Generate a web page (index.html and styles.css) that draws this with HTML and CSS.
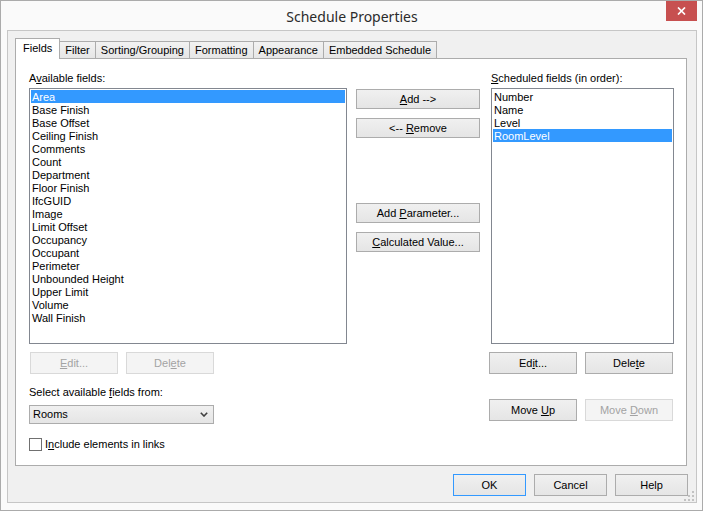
FILE: index.html
```html
<!DOCTYPE html>
<html>
<head>
<meta charset="utf-8">
<title>Schedule Properties</title>
<link rel="stylesheet" href="styles.css">
</head>
<body>
<div class="window">
  <div class="titlebar">
    <div></div>
    <div class="title">Schedule Properties</div>
    <div class="close">
      <svg width="9" height="8" viewBox="0 0 9 8"><path d="M1 0.5 L8 7.5 M8 0.5 L1 7.5" stroke="#fff" stroke-width="1.7" fill="none"/></svg>
    </div>
  </div>
  <div class="client">
    <div class="tabs">
      <div class="tab active">Fields</div>
      <div class="tab">Filter</div>
      <div class="tab">Sorting/Grouping</div>
      <div class="tab">Formatting</div>
      <div class="tab">Appearance</div>
      <div class="tab">Embedded Schedule</div>
    </div>
    <div class="panel">
      <div class="col col-left">
        <div class="label">A<u>v</u>ailable fields:</div>
        <div class="list list-left">
          <div class="item selected">Area</div>
          <div class="item">Base Finish</div>
          <div class="item">Base Offset</div>
          <div class="item">Ceiling Finish</div>
          <div class="item">Comments</div>
          <div class="item">Count</div>
          <div class="item">Department</div>
          <div class="item">Floor Finish</div>
          <div class="item">IfcGUID</div>
          <div class="item">Image</div>
          <div class="item">Limit Offset</div>
          <div class="item">Occupancy</div>
          <div class="item">Occupant</div>
          <div class="item">Perimeter</div>
          <div class="item">Unbounded Height</div>
          <div class="item">Upper Limit</div>
          <div class="item">Volume</div>
          <div class="item">Wall Finish</div>
        </div>
        <div class="btnrow btnrow-left">
          <button class="btn btn-sm disabled"><u>E</u>dit...</button>
          <button class="btn btn-sm disabled">Del<u>e</u>te</button>
        </div>
        <div class="label label-select">Select available <u>f</u>ields from:</div>
        <div class="combo">
          <span>Rooms</span>
          <svg width="8" height="5" viewBox="0 0 8 5"><path d="M0.8 0.8 L4 4 L7.2 0.8" stroke="#404040" stroke-width="1.6" fill="none"/></svg>
        </div>
        <div class="check"><span class="box"></span><span>I<u>n</u>clude elements in links</span></div>
      </div>
      <div class="col col-mid">
        <button class="btn btn-mid btn-add"><u>A</u>dd --&gt;</button>
        <button class="btn btn-mid btn-gap">&lt;-- <u>R</u>emove</button>
        <button class="btn btn-mid btn-param">Add <u>P</u>arameter...</button>
        <button class="btn btn-mid btn-gap"><u>C</u>alculated Value...</button>
      </div>
      <div class="col col-right">
        <div class="label"><u>S</u>cheduled fields (in order):</div>
        <div class="list list-right">
          <div class="item">Number</div>
          <div class="item">Name</div>
          <div class="item">Level</div>
          <div class="item selected">RoomLevel</div>
        </div>
        <div class="btnrow btnrow-right">
          <button class="btn btn-sm">Ed<u>i</u>t...</button>
          <button class="btn btn-sm">Dele<u>t</u>e</button>
        </div>
        <div class="btnrow btnrow-right btnrow-move">
          <button class="btn btn-sm">Move <u>U</u>p</button>
          <button class="btn btn-sm disabled">Move <u>D</u>own</button>
        </div>
      </div>
    </div>
    <div class="footer">
      <button class="btn btn-foot btn-default">OK</button>
      <button class="btn btn-foot">Cancel</button>
      <button class="btn btn-foot">Help</button>
    </div>
    <svg class="grip" width="10" height="10" viewBox="0 0 10 10">
      <rect x="8" y="0" width="2" height="2" fill="#c2c2c2"/>
      <rect x="4" y="4" width="2" height="2" fill="#c2c2c2"/>
      <rect x="8" y="4" width="2" height="2" fill="#c2c2c2"/>
      <rect x="0" y="8" width="2" height="2" fill="#c2c2c2"/>
      <rect x="4" y="8" width="2" height="2" fill="#c2c2c2"/>
      <rect x="8" y="8" width="2" height="2" fill="#c2c2c2"/>
    </svg>
  </div>
</div>
</body>
</html>
```

FILE: styles.css
```css
* {
  box-sizing: border-box;
}

html, body {
  margin: 0;
  padding: 0;
  background: #fafafa;
}

body {
  font-family: "Liberation Sans", Arial, sans-serif;
  font-size: 11px;
  color: #000;
}

.window {
  width: 703px;
  height: 511px;
  border: 1px solid #ababab;
  background: #fafafa;
  padding: 0 5px 7px 6px;
  display: flex;
  flex-direction: column;
}

.titlebar {
  height: 29px;
  display: grid;
  grid-template-columns: 1fr auto 1fr;
  align-items: start;
}

.title {
  font-family: "Noto Sans", "Open Sans", sans-serif;
  font-size: 14px;
  line-height: 29px;
  color: #2b2b2b;
  margin-top: 1px;
}

.close {
  justify-self: end;
  width: 31px;
  height: 20px;
  background: #c75050;
  display: flex;
  align-items: center;
  justify-content: center;
}

.client {
  position: relative;
  flex: 1;
  border: 1px solid #c6c6c6;
  background: #f0f0f0;
  display: flex;
  flex-direction: column;
}

.tabs {
  display: flex;
  align-items: flex-end;
  height: 20px;
  margin: 7px 0 0 7px;
}

.tab {
  height: 17px;
  border: 1px solid #acacac;
  border-bottom: none;
  background: linear-gradient(#f2f2f2, #e6e6e6);
  padding: 0 5px;
  line-height: 16px;
  margin-left: -1px;
  white-space: nowrap;
}

.tab.active {
  height: 21px;
  margin-left: 0;
  margin-bottom: -1px;
  background: #fff;
  line-height: 18px;
  position: relative;
  z-index: 1;
  padding: 0 7px;
}

.panel {
  height: 408px;
  margin: 0 9px 0 7px;
  border: 1px solid #acacac;
  background: #fff;
  display: flex;
  padding-left: 13px;
}

.col {
  display: flex;
  flex-direction: column;
  align-items: flex-start;
}

.col-left {
  width: 318px;
  padding-top: 12px;
}

.col-mid {
  width: 124px;
  margin-left: 9px;
  padding-top: 30px;
}

.col-right {
  width: 183px;
  margin-left: 11px;
  padding-top: 12px;
}

.label {
  line-height: 13px;
  height: 13px;
  padding-top: 1px;
  white-space: nowrap;
}

.list {
  margin-top: 4px;
  height: 256px;
  border: 1px solid #828790;
  padding: 1px;
  background: #fff;
  align-self: stretch;
}

.item {
  height: 13px;
  line-height: 13px;
  padding: 1px 0 0 1px;
  white-space: nowrap;
}

.item.selected {
  background: #3399ff;
  color: #fff;
}

.btn {
  font-family: "Liberation Sans", Arial, sans-serif;
  font-size: 11px;
  color: #000;
  border: 1px solid #acacac;
  background: linear-gradient(#f0f0f0, #e5e5e5);
  padding: 0;
  margin: 0;
  text-align: center;
  white-space: nowrap;
}

.btn.disabled {
  color: #a3a3a3;
  border-color: #d9d9d9;
  background: #f4f4f4;
}

.btn-sm {
  width: 88px;
  height: 22px;
}

.btn-mid {
  width: 124px;
  height: 20px;
}

.btn-gap {
  margin-top: 9px;
}

.btn-param {
  margin-top: 65px;
}

.btn-foot {
  width: 73px;
  height: 22px;
}

.btn-default {
  border-color: #3399ff;
}

.btnrow {
  display: flex;
  gap: 8px;
  margin-top: 8px;
}

.btnrow-left {
  margin-left: 1px;
}

.btnrow-right {
  margin-left: -2px;
}

.btnrow-move {
  margin-top: 25px;
}

.label-select {
  margin-top: 11px;
}

.combo {
  margin-top: 7px;
  width: 185px;
  height: 19px;
  border: 1px solid #acacac;
  background: linear-gradient(#f0f0f0, #e5e5e5);
  display: flex;
  align-items: center;
  justify-content: space-between;
  padding: 0 5px 0 3px;
  line-height: 13px;
}

.check {
  margin-top: 14px;
  display: flex;
  align-items: center;
  line-height: 13px;
}

.box {
  width: 13px;
  height: 13px;
  border: 1px solid #707070;
  background: #fff;
  margin-right: 3px;
}

.footer {
  display: flex;
  justify-content: flex-end;
  gap: 8px;
  margin-top: 8px;
  padding-right: 8px;
}

.grip {
  position: absolute;
  right: 2px;
  bottom: 1px;
}
```
